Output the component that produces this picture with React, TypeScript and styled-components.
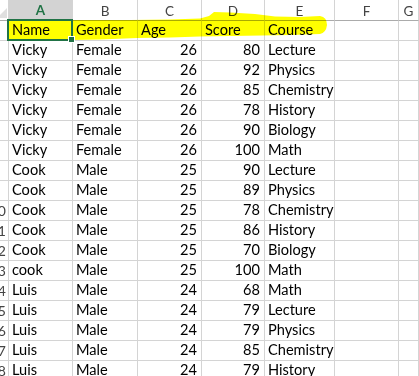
import styled, { createGlobalStyle } from "styled-components";

const GlobalStyle = createGlobalStyle`
  html, body {
    margin: 0;
    padding: 0;
    background: #ffffff;
    overflow: hidden;
  }
  * {
    box-sizing: border-box;
  }
`;

const columns = ["A", "B", "C", "D", "E", "F", "G"];

const rows: (string | number)[][] = [
  ["Name", "Gender", "Age", "Score", "Course"],
  ["Vicky", "Female", 26, 80, "Lecture"],
  ["Vicky", "Female", 26, 92, "Physics"],
  ["Vicky", "Female", 26, 85, "Chemistry"],
  ["Vicky", "Female", 26, 78, "History"],
  ["Vicky", "Female", 26, 90, "Biology"],
  ["Vicky", "Female", 26, 100, "Math"],
  ["Cook", "Male", 25, 90, "Lecture"],
  ["Cook", "Male", 25, 89, "Physics"],
  ["Cook", "Male", 25, 78, "Chemistry"],
  ["Cook", "Male", 25, 86, "History"],
  ["Cook", "Male", 25, 70, "Biology"],
  ["cook", "Male", 25, 100, "Math"],
  ["Luis", "Male", 24, 68, "Math"],
  ["Luis", "Male", 24, 79, "Lecture"],
  ["Luis", "Male", 24, 79, "Physics"],
  ["Luis", "Male", 24, 85, "Chemistry"],
  ["Luis", "Male", 24, 79, "History"],
];

function App() {
  return (
    <>
      <GlobalStyle />
      <StSheet.Wrapper>
        <StSheet.Grid>
          <StSheet.Corner>
            <svg width="8" height="20" viewBox="0 0 8 20">
              <polygon points="7,8 7,18 -3,18" fill="#dfdfdf" />
            </svg>
          </StSheet.Corner>
          {columns.map((col, i) => (
            <StSheet.ColHeader key={col} selected={i === 0}>
              {col}
            </StSheet.ColHeader>
          ))}

          {rows.map((row, r) => (
            <StSheet.Row key={r}>
              <StSheet.RowHeader>{r + 1 >= 10 ? r + 1 : ""}</StSheet.RowHeader>
              {columns.map((col, c) => {
                const value = row[c];
                return (
                  <StSheet.Cell key={col} numeric={typeof value === "number"}>
                    {value ?? ""}
                  </StSheet.Cell>
                );
              })}
            </StSheet.Row>
          ))}
        </StSheet.Grid>

        <StSheet.Marker width="419" height="45" viewBox="0 0 419 45">
          <path
            d="M7 20 L130 20 L170 19.5 L200 18.5 L209 16 L214 12 L230 12.5 L255 14 L275 16.5 L300 17 L320 16 Q327 17 327 25 Q326 33 320 34 L290 35 L262 35.5 L230 36 L200 36.5 L170 37.5 L137 38 L100 39.5 L72 40 L7 40 Z"
            fill="#ffff00"
          />
        </StSheet.Marker>

        <StSheet.Selection>
          <StSheet.Handle />
        </StSheet.Selection>
      </StSheet.Wrapper>
    </>
  );
}

export default App;

const StSheet = {
  Wrapper: styled.div`
    position: relative;
    width: 419px;
    height: 376px;
    overflow: hidden;
    font-family: Lato, "Liberation Sans", sans-serif;
    color: #000000;
  `,
  Grid: styled.div`
    display: grid;
    grid-template-columns: 9px 64px 65px 64px 63px 70px 64px 1fr;
    grid-auto-rows: 20px;
    grid-template-rows: 21px;
  `,
  Row: styled.div`
    display: contents;
  `,
  Corner: styled.div`
    display: flex;
    align-items: flex-start;
    background: #ffffff;
    border-right: 1px solid #d4d4d4;
    border-bottom: 1px solid #ababab;
    overflow: hidden;
  `,
  ColHeader: styled.div<{ selected?: boolean }>`
    display: flex;
    align-items: center;
    justify-content: center;
    padding-top: 1px;
    font-size: 13.5px;
    font-weight: ${({ selected }) => (selected ? 700 : 400)};
    color: ${({ selected }) => (selected ? "#217346" : "#444444")};
    background: ${({ selected }) => (selected ? "#d3d3d3" : "#ffffff")};
    border-right: 1px solid #d4d4d4;
    border-bottom: ${({ selected }) =>
      selected ? "2px solid #217346" : "1px solid #ababab"};
  `,
  RowHeader: styled.div`
    display: flex;
    align-items: flex-end;
    justify-content: flex-end;
    padding: 0 2px 1px 0;
    font-size: 14px;
    color: #444444;
    background: #ffffff;
    border-right: 1px solid #d4d4d4;
    border-bottom: 1px solid #d4d4d4;
    overflow: hidden;
    white-space: nowrap;
  `,
  Cell: styled.div<{ numeric?: boolean }>`
    display: flex;
    align-items: flex-end;
    justify-content: ${({ numeric }) => (numeric ? "flex-end" : "flex-start")};
    padding: 0 4px 1px 3px;
    font-size: 14.6px;
    line-height: 18px;
    white-space: nowrap;
    border-right: 1px solid #d4d4d4;
    border-bottom: 1px solid #d4d4d4;
  `,
  Marker: styled.svg`
    position: absolute;
    top: 0;
    left: 0;
    mix-blend-mode: multiply;
    pointer-events: none;
  `,
  Selection: styled.div`
    position: absolute;
    top: 19px;
    left: 7px;
    width: 66px;
    height: 22px;
    border: 2px solid #217346;
    pointer-events: none;
  `,
  Handle: styled.div`
    position: absolute;
    right: -4px;
    bottom: -4px;
    width: 5px;
    height: 5px;
    background: #217346;
    border: 1px solid #ffffff;
    box-sizing: content-box;
  `,
};
